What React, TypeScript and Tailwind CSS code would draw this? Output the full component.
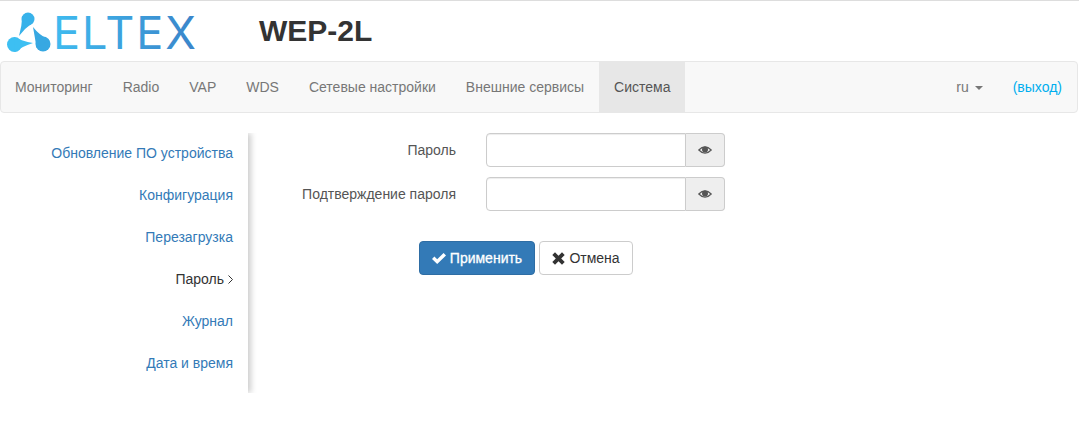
const NAV_ITEMS = ["Мониторинг", "Radio", "VAP", "WDS", "Сетевые настройки", "Внешние сервисы", "Система"];

const SIDE_ITEMS = ["Обновление ПО устройства", "Конфигурация", "Перезагрузка", "Пароль", "Журнал", "Дата и время"];

function Logo() {
  return (
    <svg width="196" height="60" viewBox="0 0 196 60" aria-label="ELTEX">
      <defs>
        <linearGradient id="eltex" x1="0" y1="0" x2="1" y2="0">
          <stop offset="0" stopColor="#3fbcf0" />
          <stop offset="1" stopColor="#3a84c9" />
        </linearGradient>
      </defs>
      <g transform="translate(0 10)">
        {/* three drops around the centre */}
        <g fill="#37b2ea">
          <circle cx="21" cy="8" r="6.5" />
          <path d="M26.7 11 Q18 17 12 25 Q15 14 15.3 5 Z" />
        </g>
        <g fill="#3dbff2">
          <circle cx="7.5" cy="33.5" r="7.5" />
          <path d="M6.9 26 Q15 30 26 32 Q16 35 8.1 41 Z" />
        </g>
        <g fill="#37a8e2">
          <circle cx="36" cy="33" r="7.5" />
          <path d="M42.5 29.2 Q32 24 26 16 Q28 27 29.5 36.8 Z" />
        </g>
      </g>
      <text x="46" y="48" fontFamily="Inter, sans-serif" fontSize="45" fontWeight="400" letterSpacing="2" fill="url(#eltex)">
        ELTEX
      </text>
    </svg>
  );
}

function EyeIcon() {
  return (
    <svg width="14" height="10" viewBox="0 0 14 10" className="text-[#555]">
      <path d="M0.8 5 Q7 -1.4 13.2 5 Q7 11.4 0.8 5 Z" fill="none" stroke="currentColor" strokeWidth="1.2" />
      <circle cx="7" cy="4.6" r="3" fill="currentColor" />
    </svg>
  );
}

function OkIcon() {
  return (
    <svg width="14" height="11" viewBox="0 0 14 11" fill="currentColor">
      <path d="M0 6 L2.4 3.6 L5.2 6.2 L11.6 0 L14 2.4 L5.2 11 Z" />
    </svg>
  );
}

function CrossIcon() {
  return (
    <svg width="13" height="13" viewBox="0 0 13 13" fill="currentColor">
      <path d="M0.3 3 L3 0.3 L6.5 3.8 L10 0.3 L12.7 3 L9.2 6.5 L12.7 10 L10 12.7 L6.5 9.2 L3 12.7 L0.3 10 L3.8 6.5 Z" />
    </svg>
  );
}

function PasswordRow({ label }: { label: string }) {
  return (
    <div className="flex items-center">
      <label className="w-[186px] text-right text-[#555]">{label}</label>
      <div className="ml-[30px] flex h-[34px] w-[239px]">
        <input
          type="password"
          className="h-full w-[200px] rounded-l-[4px] border border-[#ccc] bg-white shadow-[inset_0_1px_1px_rgba(0,0,0,0.075)]"
        />
        <span className="flex w-[39px] items-center justify-center rounded-r-[4px] border border-l-0 border-[#ccc] bg-[#eee]">
          <EyeIcon />
        </span>
      </div>
    </div>
  );
}

export default function App() {
  return (
    <div className="min-h-[430px] bg-white font-['Liberation_Sans',Arial,sans-serif] text-[14px] leading-[20px] text-[#333]">
      <header className="flex h-[61px] items-start border-t border-[#ddd]">
        <div className="ml-[7px] h-[60px] w-[196px]">
          <Logo />
        </div>
        <h1 className="ml-[56px] mt-[13px] text-[30px] font-bold leading-[33px] text-[#333]">WEP-2L</h1>
      </header>

      <nav className="flex h-[52px] w-[1078px] items-stretch rounded-[4px] border border-[#e7e7e7] bg-[#f8f8f8] text-[#777]">
        <ul className="-ml-px flex">
          {NAV_ITEMS.map((item) => (
            <li
              key={item}
              className={item === "Система" ? "flex items-center bg-[#e7e7e7] px-[15px] text-[#555]" : "flex items-center px-[15px]"}
            >
              {item}
            </li>
          ))}
        </ul>
        <div className="ml-auto flex items-center pr-[15px]">
          <span className="flex items-center">
            ru
            <span className="ml-[6px] mt-[1px] h-0 w-0 border-x-[4px] border-t-[4px] border-x-transparent border-t-[#777]" />
          </span>
          <a className="ml-[30px] text-[#00aeef]">(выход)</a>
        </div>
      </nav>

      <div className="mt-[20px] flex items-start">
        <aside className="h-[260px] w-[248px] pr-[15px] text-right shadow-[3px_0_6px_rgba(0,0,0,0.2)] [clip-path:inset(0_-12px_0_0)]">
          <ul className="-mt-px flex flex-col">
            {SIDE_ITEMS.map((item) => (
              <li key={item} className="flex h-[42px] items-center justify-end">
                {item === "Пароль" ? (
                  <span className="flex items-center gap-[4px] text-[#333]">
                    Пароль
                    <svg width="5" height="9" viewBox="0 0 5 9" fill="none" stroke="#333" strokeWidth="1">
                      <path d="M0.5 0.5 L4.5 4.5 L0.5 8.5" />
                    </svg>
                  </span>
                ) : (
                  <a className="text-[#337ab7]">{item}</a>
                )}
              </li>
            ))}
          </ul>
        </aside>

        <form className="ml-[22px]">
          <div className="flex flex-col gap-[10px]">
            <PasswordRow label="Пароль" />
            <PasswordRow label="Подтверждение пароля" />
          </div>
          <div className="ml-[149px] mt-[30px] flex gap-[4px]">
            <button
              type="button"
              className="flex h-[34px] w-[116px] items-center justify-center gap-[4px] rounded-[4px] border border-[#2e6da4] bg-[#337ab7] text-white [-webkit-text-stroke:0.3px_white]"
            >
              <OkIcon />
              Применить
            </button>
            <button
              type="button"
              className="flex h-[34px] w-[94px] items-center justify-center gap-[4px] rounded-[4px] border border-[#ccc] bg-white text-[#333]"
            >
              <CrossIcon />
              Отмена
            </button>
          </div>
        </form>
      </div>
    </div>
  );
}
